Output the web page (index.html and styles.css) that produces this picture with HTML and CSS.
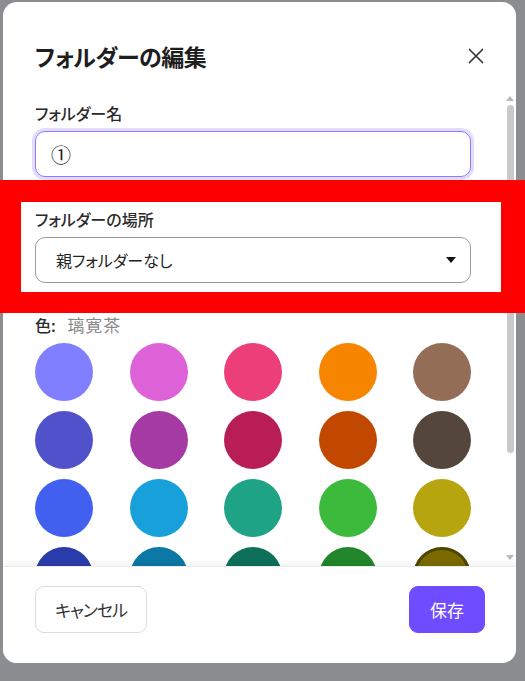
FILE: index.html
```html
<!DOCTYPE html>
<html lang="ja">
<head>
  <meta charset="UTF-8">
  <title>フォルダーの編集</title>
  <link rel="stylesheet" href="styles.css">
</head>
<body>
  <div class="dialog">
    <div class="dialog-header">
      <h1>フォルダーの編集</h1>
      <button class="close-btn" aria-label="閉じる">
        <svg width="16" height="16" viewBox="0 0 16 16">
          <path d="M1 1 L15 15 M15 1 L1 15" stroke="#333" stroke-width="1.6" fill="none"/>
        </svg>
      </button>
    </div>

    <div class="dialog-body">
      <div class="body-content">
        <div class="field">
          <label for="folderName">フォルダー名</label>
          <input type="text" id="folderName" class="text-input" value="①">
        </div>

        <div class="field">
          <label>フォルダーの場所</label>
          <div class="select-box">
            <span>親フォルダーなし</span>
            <svg width="10" height="6" viewBox="0 0 10 6"><path d="M0 0 H10 L5 6 Z" fill="#111"/></svg>
          </div>
        </div>

        <div class="field">
          <div class="color-label">色: <span class="color-name">璃寛茶</span></div>
          <div class="swatches">
            <span class="swatch" style="background:#7f7fff"></span>
            <span class="swatch" style="background:#dd62d7"></span>
            <span class="swatch" style="background:#ec3f7a"></span>
            <span class="swatch" style="background:#f78500"></span>
            <span class="swatch" style="background:#946d56"></span>

            <span class="swatch" style="background:#5151cb"></span>
            <span class="swatch" style="background:#a43aa2"></span>
            <span class="swatch" style="background:#b81e55"></span>
            <span class="swatch" style="background:#c24800"></span>
            <span class="swatch" style="background:#54463c"></span>

            <span class="swatch" style="background:#4160ef"></span>
            <span class="swatch" style="background:#18a0da"></span>
            <span class="swatch" style="background:#1ea385"></span>
            <span class="swatch" style="background:#3cba3c"></span>
            <span class="swatch" style="background:#b6a50f"></span>

            <span class="swatch" style="background:#2a3cab"></span>
            <span class="swatch" style="background:#0b78a5"></span>
            <span class="swatch" style="background:#0e7059"></span>
            <span class="swatch" style="background:#22862a"></span>
            <span class="swatch selected" style="background:#7a6a00"></span>
          </div>
        </div>
      </div>

      <!-- scrollbar of the body area -->
      <div class="scrollbar">
        <svg width="8" height="5" viewBox="0 0 8 5"><path d="M0 5 L4 0 L8 5 Z" fill="#b8b8b8"/></svg>
        <div class="scroll-thumb"></div>
        <svg class="scroll-down" width="8" height="5" viewBox="0 0 8 5"><path d="M0 0 L8 0 L4 5 Z" fill="#b8b8b8"/></svg>
      </div>
    </div>

    <div class="dialog-footer">
      <button class="btn btn-cancel">キャンセル</button>
      <button class="btn btn-save">保存</button>
    </div>
  </div>

  <!-- highlight frame around the location field -->
  <div class="highlight"></div>
</body>
</html>
```

FILE: styles.css
```css
html, body {
  margin: 0;
  height: 681px;
  overflow: hidden;
}

body {
  background: #8c8d91;
  font-family: "Noto Sans CJK JP", "Noto Sans", sans-serif;
  font-feature-settings: "palt";
  color: #222;
}

.dialog {
  margin: 2px 0 0 3px;
  width: 513px;
  height: 661px;
  background: #fff;
  border-radius: 14px;
  display: flex;
  flex-direction: column;
  overflow: hidden;
}

.dialog-header {
  height: 90px;
  box-sizing: border-box;
  padding: 38px 32px 0 32px;
  display: flex;
  justify-content: space-between;
  align-items: flex-start;
}

.dialog-header h1 {
  margin: 0;
  font-size: 23px;
  line-height: 32px;
  letter-spacing: -0.5px;
  font-weight: 700;
  color: #1e1e1e;
}

.close-btn {
  border: none;
  background: none;
  padding: 0;
  width: 16px;
  height: 32px;
  display: flex;
  align-items: center;
  cursor: pointer;
}

.dialog-body {
  flex: 1;
  display: flex;
  min-height: 0;
}

.body-content {
  flex: 1;
  overflow: hidden;
  padding: 9px 33px 0 32px;
}

.scrollbar {
  width: 12px;
  display: flex;
  flex-direction: column;
  align-items: center;
  padding: 4px 0 6px;
  box-sizing: border-box;
}

.scroll-thumb {
  width: 7px;
  height: 348px;
  margin-top: 4px;
  border-radius: 4px;
  background: #c9c9c9;
}

.scroll-down {
  margin-top: auto;
}

.field {
  display: flex;
  flex-direction: column;
  margin-bottom: 30px;
}

.field label {
  font-size: 16px;
  line-height: 24px;
  font-weight: 500;
  color: #2b2b2b;
  margin-bottom: 6px;
}

.text-input {
  height: 46px;
  box-sizing: border-box;
  border: 1.5px solid #8c7bff;
  box-shadow: 0 0 0 3px #e2dcff;
  border-radius: 10px;
  padding: 0 15px;
  font-family: inherit;
  font-size: 20px;
  color: #222;
  outline: none;
}

.select-box {
  height: 46px;
  box-sizing: border-box;
  border: 1px solid #9b9b9b;
  border-radius: 10px;
  padding: 0 14px 0 20px;
  display: flex;
  justify-content: space-between;
  align-items: center;
  font-size: 16px;
  color: #222;
}

.color-label {
  font-size: 16px;
  line-height: 24px;
  font-weight: 500;
  color: #2b2b2b;
  margin-bottom: 6px;
}

.color-name {
  font-size: 17px;
  font-weight: 400;
  letter-spacing: 1px;
  color: #8a8a8a;
  margin-left: 8px;
}

.swatches {
  display: grid;
  grid-template-columns: repeat(5, 58px);
  justify-content: space-between;
  row-gap: 10px;
}

.swatch {
  width: 58px;
  height: 58px;
  border-radius: 50%;
  box-sizing: border-box;
}

.swatch.selected {
  box-shadow: inset 0 0 0 3px rgba(0, 0, 0, 0.35);
}

.dialog-footer {
  position: relative;
  height: 97px;
  box-sizing: border-box;
  padding: 19px 31px 0 32px;
  display: flex;
  justify-content: space-between;
  align-items: flex-start;
  border-top: 1px solid #ebebeb;
  box-shadow: 0 -3px 6px rgba(0, 0, 0, 0.05);
  background: #fff;
}

.btn {
  height: 47px;
  padding: 0 19px;
  border-radius: 9px;
  font-family: inherit;
  font-feature-settings: "palt";
  font-size: 17px;
  letter-spacing: -1px;
  cursor: pointer;
}

.btn-cancel {
  background: #fff;
  border: 1px solid #dcdcdc;
  color: #333;
}

.btn-save {
  background: #6f4cff;
  border: 1px solid #6f4cff;
  color: #fff;
  letter-spacing: 0;
  padding: 0 20px;
}

.highlight {
  position: absolute;
  left: 0;
  top: 180px;
  width: 525px;
  height: 133px;
  box-sizing: border-box;
  border-style: solid;
  border-color: #ff0000;
  border-width: 22px 24px 21px 21px;
}
```
